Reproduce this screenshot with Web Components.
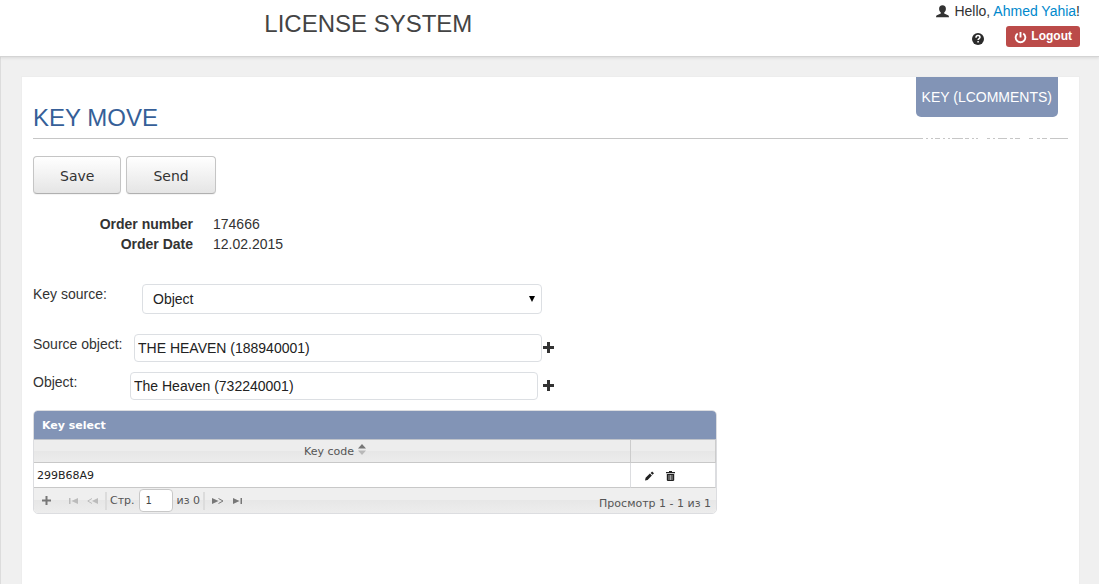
<!DOCTYPE html>
<html lang="en">
<head>
<meta charset="utf-8">
<title>License System</title>
<style>
  html, body { margin: 0; height: 100%; }
  body { font: 14px/20px "Liberation Sans", Arial, sans-serif; color: #333; background: #f0f0f0; }
</style>
</head>
<body>
<license-app></license-app>
<script>
const define = (name, html, init) => customElements.define(name, class extends HTMLElement {
  connectedCallback() {
    if (this.shadowRoot) return;
    const t = document.createElement('template');
    t.innerHTML = '<style>*{box-sizing:border-box}</style>' + html;
    this.attachShadow({ mode: 'open' }).append(t.content.cloneNode(true));
    if (init) init.call(this, this.shadowRoot);
  }
});

define('app-header', `
<style>
  :host { display: grid; grid-template-columns: 2fr 1fr; height: 57px; flex: none; background: #fff;
    border-bottom: 1px solid #d4d4d4; box-shadow: 0 1px 3px rgba(0,0,0,.1); position: relative; }
  h1 { margin: 0; padding: 4px 0 0 4px; font-size: 24px; font-weight: 400; line-height: 40px; text-align: center; color: #444; }
  .user { display: flex; flex-direction: column; align-items: flex-end; gap: 5px; padding: 1px 19px 0 0; white-space: nowrap; }
  .line { display: flex; align-items: center; }
  .line svg { margin-right: 5px; }
  a { color: #08c; text-decoration: none; }
  .tools { display: flex; align-items: center; gap: 22px; }
  button { border: 0; padding: 0; background: none; font: inherit; color: inherit; display: flex; align-items: center; }
  .help { padding-top: 4px; }
  .logout { height: 21px; padding: 0 8px; gap: 4px; background: #bb4b49; color: #fff; border-radius: 3px; font-size: 12px; font-weight: 700; }
  .logout span { padding-bottom: 1px; }
  .logout svg { margin-top: 1px; }
</style>
<h1>LICENSE SYSTEM</h1>
<div class="user">
  <div class="line">
    <svg width="13" height="13" viewBox="0 0 13 13" fill="#333" aria-hidden="true"><path d="M6.500 .3C8.700.3 9.900 1.800 9.900 3.700c0 1.700-.7 3-1.700 3.700v1.200l3.300 1.400c1 .4 1.500 1 1.500 2.300H0c0-1.300.500-1.900 1.500-2.300l3.300-1.400V7.400C3.800 6.700 3.100 5.400 3.100 3.700 3.100 1.800 4.300.3 6.500.3z"/></svg>
    <span>Hello, <a href="#profile">Ahmed Yahia</a>!</span>
  </div>
  <div class="tools">
    <button class="help" type="button" aria-label="Help">
      <svg width="12" height="12" viewBox="0 0 12 12"><circle cx="6" cy="6" r="6" fill="#2b2b2b"/><path d="M4 4.700C4 3 5 2.600 6 2.600s2 .6 2 1.700c0 1.300-1.900 1.300-1.900 2.700M6.100 8v1.600" fill="none" stroke="#fff" stroke-width="1.500"/></svg>
    </button>
    <button class="logout" type="button">
      <svg width="13" height="13" viewBox="0 0 14 14" fill="none" stroke="#fff" stroke-width="2" aria-hidden="true"><path d="M4 2.700a5.200 5.200 0 1 0 6 0M7 1v6"/></svg>
      <span>Logout</span>
    </button>
  </div>
</div>`);

define('page-card', `
<style>
  :host { display: block; position: relative; flex: 1 0 auto; margin: 20px 20px 0 21px; padding: 20px 11px; background: #fff;
    outline: 1px solid #ededed; }
  .tab { position: absolute; top: 0; right: 21px; padding: 0 6px; line-height: 40px; background: #8294b6; color: #fff;
    border-radius: 0 0 5px 5px; text-decoration: none; white-space: nowrap; }
  header { position: relative; border-bottom: 1px solid #c6c6c6; margin-bottom: 17px; }
  h2 { margin: 0; font-size: 24px; font-weight: 400; line-height: 41px; color: #365f98; }
  .breaks { position: absolute; right: 17px; bottom: -1px; }
</style>
<header><h2></h2>
  <svg class="breaks" width="130" height="1" viewBox="0 0 130 1" stroke="#fff" aria-hidden="true"><path d="M2 .5h3m2 0h3m2 0h2m5 0h3m2 0h3m2 0h2m11 0h2m4 0h3m2 0h2m2 0h9m3 0h3m2 0h3m9 0h3m3 0h2m5 0h9m4 0h4m3 0h2m5 0h3m4 0h2" /></svg>
</header>
<a class="tab" href="#comments"></a>
<slot></slot>`, function (r) {
  r.querySelector('h2').textContent = this.getAttribute('heading');
  r.querySelector('.tab').textContent = this.getAttribute('tab');
});

define('push-button', `
<style>
  :host { display: block; }
  button { height: 38px; padding: 2px 26px 0; font: 14px/20px "DejaVu Sans", Verdana, sans-serif; color: #333;
    border: 1px solid #c5c5c5; border-bottom-color: #b0b0b0; border-radius: 4px; background: linear-gradient(#fff, #e5e5e5);
    box-shadow: 0 1px 1px rgba(0,0,0,.05); }
</style>
<button type="button"><slot></slot></button>`);

define('order-info', `
<style>
  dl { display: grid; grid-template-columns: 160px auto; column-gap: 20px; margin: 20px 0 30px; }
  dt { text-align: right; font-weight: 700; }
  dd { margin: 0; }
</style>
<dl><dt>Order number</dt><dd>174666</dd><dt>Order Date</dt><dd>12.02.2015</dd></dl>`);

define('select-field', `
<style>
  :host { display: flex; margin-bottom: 20px; }
  label { width: 109px; }
  .box { position: relative; width: 400px; }
  select { appearance: none; display: block; width: 100%; height: 30px; padding: 0 10px; font: inherit; color: #222;
    border: 1px solid #dcdfe3; border-radius: 4px; background: #fff; }
  svg { position: absolute; right: 7px; top: 12px; pointer-events: none; }
</style>
<label for="c">Key source:</label>
<div class="box"><select id="c"><option>Object</option></select>
<svg width="6" height="6" viewBox="0 0 6 6" aria-hidden="true"><path d="M0 0h6L3 6z"/></svg></div>`);

define('lookup-field', `
<style>
  :host { display: flex; margin-bottom: 10px; }
  label { width: var(--label, 101px); }
  input { width: 408px; height: 28px; padding: 0 3px; font: inherit; color: #222; border: 1px solid #dcdfe3; border-radius: 4px; background: #fff; }
  button { border: 0; padding: 0 0 0 1px; background: none; display: flex; align-items: center; height: 26px; }
  :host([gap]) button { padding-left: 5px; }
</style>
<label for="c"></label><input id="c" type="text">
<button type="button" aria-label="Choose"><svg width="11" height="11" viewBox="0 0 11 11" fill="#333"><path d="M4 0h3v4h4v3H7v4H4V7H0V4h4z"/></svg></button>`, function (r) {
  r.querySelector('label').textContent = this.getAttribute('label');
  r.querySelector('input').value = this.getAttribute('value');
});

define('grid-pager', `
<style>
  :host { display: flex; align-items: center; height: 25px; padding: 0 5px 0 8px; color: #555;
    background: linear-gradient(#efefef 0 50%, #e7e7e7 50%, #ededed); }
  button { display: flex; border: 0; padding: 0; background: none; color: #777; }
  button:disabled { color: #bbb; }
  svg { fill: currentColor; }
  .first { margin-left: 18px; } .prev { margin-left: 8px; } .last { margin-left: 9px; } .next { margin-left: 7px; }
  i { width: 2px; height: 18px; background: #dcdcdc; }
  .prev + i { margin: 0 3px 0 7px; }
  .total { margin-right: 3px; }
  label, .total, .view { line-height: 26px; align-self: flex-start; }
  input { width: 34px; height: 23px; margin: 0 4px; padding: 0 6px; font: 10px/20px "DejaVu Sans", Verdana, sans-serif; color: #444; border: 1px solid #c8c8c8; border-radius: 4px; background: #fff; }
  .view { margin-left: auto; padding-top: 3px; }
</style>
<button type="button" aria-label="Add"><svg width="9" height="9"><path d="M3.500 0h2v3.500H9v2H5.500V9h-2V5.500H0v-2h3.500z"/></svg></button>
<button class="first" type="button" disabled aria-label="First"><svg width="10" height="6"><path d="M0 0h1.500v6H0zM9 0v6L2.500 3z"/></svg></button>
<button class="prev" type="button" disabled aria-label="Previous"><svg width="11" height="6"><path d="M11 0v6L5 3z"/><path d="M5 .5L.8 3 5 5.500" fill="none" stroke="currentColor"/></svg></button>
<i></i><label for="p">Стр.</label><input id="p" type="text" value="1"><span class="total">из 0</span><i></i>
<button class="next" type="button" aria-label="Next"><svg width="12" height="6"><path d="M0 0v6l6.500-3z"/><path d="M6.500 .5L11 3 6.500 5.500" fill="none" stroke="currentColor"/></svg></button>
<button class="last" type="button" aria-label="Last"><svg width="10" height="6"><path d="M0 0v6l6.500-3zM7.500 0H9v6H7.500z"/></svg></button>
<span class="view">Просмотр 1 - 1 из 1</span>`);

define('key-grid', `
<style>
  :host { display: block; width: 684px; font: 11px/22px "DejaVu Sans", Verdana, sans-serif; border: 1px solid #dcdde0; border-radius: 5px; overflow: hidden; }
  table { width: 100%; border-collapse: separate; border-spacing: 0; table-layout: fixed; }
  caption { height: 28px; padding: 1px 0 0 8px; line-height: 27px; text-align: left; font-weight: 700; color: #fff; background: #8294b6; }
  col.act { width: 86px; }
  th { height: 24px; padding: 2px 0 0 6px; line-height: 20px; font-weight: 400; color: #555; border-top: 1px solid #bfc3ca; border-bottom: 1px solid #c8c8c8;
    background: linear-gradient(#ededed 0 50%, #e7e7e7 50%, #ececec); }
  th + th { border-left: 1px solid #ccc; border-right: 1px solid #ccc; }
  th svg { margin-left: 4px; vertical-align: 0; }
  td { height: 25px; padding: 1px 3px 0; color: #222; background: #fff; border-bottom: 1px solid #c8c8c8; }
  td + td { border-left: 1px solid #dcdde0; border-right: 1px solid #dcdde0;
    background: linear-gradient(#222, #222) 0 0 / 1px 1px no-repeat border-box, linear-gradient(#222, #222) 100% 0 / 1px 1px no-repeat border-box, #fff; }
  .icons { display: flex; gap: 12px; padding-left: 11px; }
  button { display: flex; padding: 0; border: 0; background: none; }
</style>
<table>
  <caption>Key select</caption>
  <colgroup><col><col class="act"></colgroup>
  <thead><tr><th>Key code<svg width="8" height="11" viewBox="0 0 8 11" aria-hidden="true"><path d="M4 0l4 4.500H0z" fill="#777"/><path d="M4 11l4-4.500H0z" fill="#b8b8b8"/></svg></th><th></th></tr></thead>
  <tbody><tr><td>299B68A9</td><td><div class="icons">
    <button type="button" aria-label="Edit"><svg width="9" height="10" viewBox="0 0 9 10" fill="#222"><path d="M0 9.500l.6-2.700L4.900 2.500l2 2L2.600 8.900zM5.600 1.900L7.100.4 9 2.300 7.500 3.800z"/></svg></button>
    <button type="button" aria-label="Delete"><svg width="9" height="10" viewBox="0 0 9 10" fill="#222"><path d="M0 1h3V0h3v1h3v1.200H0z"/><path d="M.8 3h7.400v6.200l-.8.8H1.600l-.8-.8z"/><path d="M3 4v5M4.500 4v5M6 4v5" stroke="#fff" stroke-width=".6"/></svg></button>
  </div></td></tr></tbody>
</table>
<grid-pager></grid-pager>`);

define('license-app', `
<style>
  :host { display: flex; flex-direction: column; min-height: 100%; }
  main { flex: 1; display: flex; flex-direction: column; border-left: 1px solid #dcdcdc; }
  .buttons { display: flex; gap: 5px; }
</style>
<app-header></app-header>
<main>
  <page-card heading="KEY MOVE" tab="KEY (LCOMMENTS)">
    <div class="buttons"><push-button>Save</push-button><push-button>Send</push-button></div>
    <order-info></order-info>
    <select-field></select-field>
    <lookup-field label="Source object:" value="THE HEAVEN (188940001)"></lookup-field>
    <lookup-field gap style="--label:97px" label="Object:" value="The Heaven (732240001)"></lookup-field>
    <key-grid></key-grid>
  </page-card>
</main>`);
</script>
</body>
</html>
